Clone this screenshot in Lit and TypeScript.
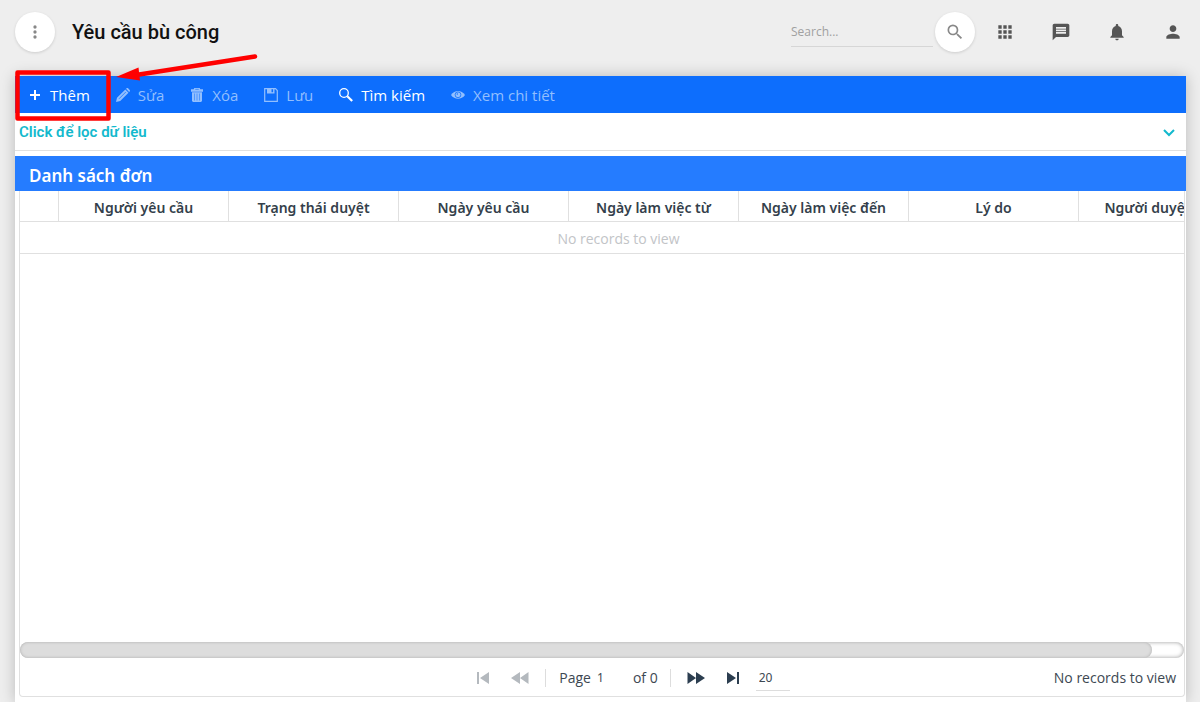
import { LitElement, html, css, svg } from "lit";
import { customElement, state } from "lit/decorators.js";
import { styleMap } from "lit/directives/style-map.js";

const icons = {
  more: svg`<path d="M12 8a2 2 0 1 0 0-4 2 2 0 0 0 0 4zm0 2a2 2 0 1 0 0 4 2 2 0 0 0 0-4zm0 6a2 2 0 1 0 0 4 2 2 0 0 0 0-4z"/>`,
  search: svg`<path d="M15.5 14h-.79l-.28-.27A6.47 6.47 0 0 0 16 9.5 6.5 6.5 0 1 0 9.5 16c1.61 0 3.09-.59 4.23-1.57l.27.28v.79l5 4.99L20.49 19l-4.99-5zm-6 0C7.01 14 5 11.99 5 9.5S7.01 5 9.5 5 14 7.01 14 9.5 11.99 14 9.5 14z"/>`,
  apps: svg`<path d="M4 8h4V4H4v4zm6 12h4v-4h-4v4zm-6 0h4v-4H4v4zm0-6h4v-4H4v4zm6 0h4v-4h-4v4zm6-10v4h4V4h-4zm-6 4h4V4h-4v4zm6 6h4v-4h-4v4zm0 6h4v-4h-4v4z"/>`,
  message: svg`<path d="M20 2H4c-1.1 0-1.99.9-1.99 2L2 22l4-4h14c1.1 0 2-.9 2-2V4c0-1.100-.9-2-2-2zm-2 12H6v-2h12v2zm0-3H6V9h12v2zm0-3H6V6h12v2z"/>`,
  bell: svg`<path d="M12 22c1.100 0 2-.9 2-2h-4c0 1.100.89 2 2 2zm6-6v-5c0-3.070-1.640-5.640-4.500-6.320V4c0-.83-.67-1.500-1.500-1.500s-1.500.67-1.500 1.500v.68C7.630 5.360 6 7.920 6 11v5l-2 2v1h16v-1l-2-2z"/>`,
  person: svg`<path d="M12 12c2.210 0 4-1.790 4-4s-1.790-4-4-4-4 1.790-4 4 1.790 4 4 4zm0 2c-2.670 0-8 1.340-8 4v2h16v-2c0-2.660-5.330-4-8-4z"/>`,
};
const material = (name: keyof typeof icons) =>
  html`<svg class="material" viewBox="0 0 24 24" aria-hidden="true">${icons[name]}</svg>`;

const tools = [
  { label: "Thêm", enabled: true, art: svg`<path d="M7 2v10M2 7h10" stroke="currentColor" stroke-width="2"/>` },
  { label: "Sửa", enabled: false, art: svg`<path fill="currentColor" d="M0 14l1-4.200L9.300 1.500l3.200 3.200L4.200 13zM10 .8l.6-.5c.5-.4 1-.4 1.500 0l1.600 1.600c.4.5.4 1 0 1.500l-.6.6z"/><path d="M3 10.800L9.800 4" stroke="#0d6efd" stroke-width=".7"/>` },
  { label: "Xóa", enabled: false, art: svg`<path fill="currentColor" d="M4.300 0h5.400l.6 1.300H13v2.400H1V1.300h2.700zM2 4.200h10V13l-1 1H3l-1-1z"/><path fill="#0d6efd" d="M5.300.9h3.400v.6H5.300z"/><path d="M4.500 5.500v7M7 5.500v7M9.500 5.500v7" stroke="#0d6efd" stroke-width=".5"/>` },
  { label: "Lưu", enabled: false, art: svg`<path fill="none" stroke="currentColor" stroke-width="1.200" d="M.7.700h10.800l1.800 1.800v10.800H.7z"/><path fill="currentColor" d="M3 0h7.500v5.500H3z"/><path fill="#0d6efd" d="M7.500 1.200h1.600v3H7.500z"/>` },
  { label: "Tìm kiếm", enabled: true, art: svg`<circle cx="5" cy="5" r="4.300" fill="none" stroke="currentColor" stroke-width="1.300"/><path d="M8.300 8.300L13.200 13" stroke="currentColor" stroke-width="2.200"/>` },
  { label: "Xem chi tiết", enabled: false, art: svg`<path fill="currentColor" d="M0 7C3.500 1.800 10.500 1.800 14 7 10.500 12 3.500 12 0 7z"/><circle cx="7" cy="6.800" r="2.900" fill="none" stroke="#0d6efd" stroke-width=".8"/><circle cx="6.300" cy="6" r=".7" fill="#0d6efd"/>` },
];

const columns = [
  { title: "", width: 39 },
  { title: "Người yêu cầu", width: 170 },
  { title: "Trạng thái duyệt", width: 170 },
  { title: "Ngày yêu cầu", width: 170 },
  { title: "Ngày làm việc từ", width: 170 },
  { title: "Ngày làm việc đến", width: 170 },
  { title: "Lý do", width: 170 },
  { title: "Người duyệt", width: 138 },
];
const tableWidth = columns.reduce((sum, c) => sum + c.width, 0);

@customElement("app-header")
export class AppHeader extends LitElement {
  static styles = css`
    :host { display: flex; align-items: center; height: 64px; padding: 0 7px 12px 15px; color: #555; }
    button { border: 0; padding: 0; background: none; color: inherit; width: 40px; height: 40px; display: grid; place-items: center; }
    .round { background: #fff; border-radius: 50%; color: #888; box-shadow: 0 1px 3px rgba(0, 0, 0, 0.14); }
    .material { width: 20px; height: 20px; fill: currentColor; display: block; }
    h1 { margin: 0 auto 0 17px; font: 500 20px/28px Roboto, sans-serif; color: #111; }
    .search { display: flex; align-items: center; gap: 2px; margin-right: 10px; }
    input { box-sizing: border-box; width: 142px; height: 30px; border: 0; border-bottom: 1px solid #d6d6d6; padding: 0; background: none; font: 12px/20px "Open Sans", sans-serif; outline: 0; }
    input::placeholder { color: #a0a0a0; opacity: 1; }
    nav { display: flex; gap: 16px; }
  `;
  render() {
    return html`
      <button class="round" aria-label="Menu">${material("more")}</button>
      <h1>Yêu cầu bù công</h1>
      <form class="search" role="search">
        <input type="search" placeholder="Search..." aria-label="Search" />
        <button type="button" class="round" aria-label="Search">${material("search")}</button>
      </form>
      <nav>
        <button aria-label="Apps">${material("apps")}</button>
        <button aria-label="Messages">${material("message")}</button>
        <button aria-label="Notifications">${material("bell")}</button>
        <button aria-label="Account">${material("person")}</button>
      </nav>
    `;
  }
}

@customElement("app-toolbar")
export class AppToolbar extends LitElement {
  static styles = css`
    :host { display: flex; height: 37px; background: #0d6efd; position: relative; }
    button { display: flex; align-items: center; gap: 8px; border: 0; padding: 0 13px; background: none; color: #fff; font: 15px/24px "Open Sans", sans-serif; white-space: nowrap; }
    button:disabled { color: #92bffe; }
    .icon { width: 14px; height: 14px; }
    .callout { position: absolute; left: -1px; top: -24px; width: 246px; height: 70px; pointer-events: none; }
  `;
  render() {
    return html`
      ${tools.map((t) => html`<button ?disabled=${!t.enabled}>
        <svg class="icon" viewBox="0 0 14 14" aria-hidden="true">${t.art}</svg>${t.label}
      </button>`)}
      <svg class="callout" viewBox="0 0 246 70" aria-hidden="true">
        <rect x="3.500" y="20.500" width="91" height="46" fill="none" stroke="#f00" stroke-width="4.500" stroke-linejoin="round"/>
        <path d="M241 4.500L122 23" stroke="#f00" stroke-width="4.500" stroke-linecap="round"/>
        <path d="M102 25L124.500 15.500 126 28.500z" fill="#f00"/>
      </svg>
    `;
  }
}

@customElement("request-grid")
export class RequestGrid extends LitElement {
  static styles = css`
    :host { display: flex; flex-direction: column; flex: 1; min-height: 0; margin: 0 1px 5px 4px; border: 1px solid #e0e0e0; border-top: 0; border-radius: 0 0 4px 4px; font: 14px/20px "Open Sans", sans-serif; color: #3d4852; }
    .view { flex: 1; overflow: hidden; min-height: 0; }
    table { table-layout: fixed; border-collapse: separate; border-spacing: 0; }
    th, td { box-sizing: border-box; padding: 2px 0 0; text-align: center; border-bottom: 1px solid #e0e0e0; }
    th { height: 31px; padding-top: 4px; font-family: "Noto Sans", sans-serif; font-weight: 600; color: #343f4b; border-right: 1px solid #e0e0e0; white-space: nowrap; }
    td { height: 32px; color: #c2c4c7; }
    .track { height: 16px; border-radius: 8px; background: #fff; box-shadow: inset 0 0 4px #999; overflow: hidden; }
    .thumb { height: 16px; border-radius: 8px; background: #ddd; box-shadow: inset 0 0 3px #aaa; }
    .pager { box-sizing: border-box; display: grid; grid-template-columns: 1fr auto 1fr; align-items: center; height: 38px; padding-top: 2px; }
    .controls { grid-column: 2; display: flex; align-items: center; margin-left: 50px; }
    .controls button { border: 0; padding: 0; background: none; color: #2c3e50; display: grid; place-items: center; width: 37px; height: 20px; }
    .controls button:disabled { color: #b4b9be; }
    .arrow { width: 18px; height: 14px; fill: currentColor; }
    .rule { width: 1px; height: 18px; background: #ddd; margin: 0 7px; }
    .page { display: flex; align-items: center; gap: 6px; margin-left: 6px; }
    .total { margin-right: 5px; }
    input, select { appearance: none; box-sizing: border-box; border: 0; background: none; padding: 0; font: 12px/20px "Noto Sans", sans-serif; color: inherit; outline: 0; }
    input { width: 36px; }
    select { width: 34px; height: 26px; margin-left: 4px; padding-left: 3px; border-bottom: 1px solid #ddd; }
    .status { justify-self: end; padding-right: 8px; }
  `;
  @state() page = "1";
  render() {
    const thumb = styleMap({ width: `${(1164 / tableWidth) * 100}%` });
    return html`
      <div class="view">
        <table style=${styleMap({ width: `${tableWidth}px` })}>
          <colgroup>${columns.map((c) => html`<col style=${styleMap({ width: `${c.width}px` })} />`)}</colgroup>
          <thead><tr>${columns.map((c) => html`<th scope="col">${c.title}</th>`)}</tr></thead>
          <tbody><tr><td colspan=${columns.length}>No records to view</td></tr></tbody>
        </table>
      </div>
      <div class="track"><div class="thumb" style=${thumb}></div></div>
      <div class="pager">
        <div class="controls">
          <button disabled aria-label="First page"><svg class="arrow" viewBox="0 0 18 14"><path d="M3 1h2v12H3zM15 1v12L6 7z"/></svg></button>
          <button disabled aria-label="Previous page"><svg class="arrow" viewBox="0 0 18 14"><path d="M9 1v12L0 7zM17.500 1v12L9 7z"/></svg></button>
          <span class="rule"></span>
          <label class="page">Page <input .value=${this.page} /></label>
          <span class="total">of 0</span>
          <span class="rule"></span>
          <button aria-label="Next page"><svg class="arrow" viewBox="0 0 18 14"><path d="M.5 1v12L9 7zM9 1v12l9-6z"/></svg></button>
          <button aria-label="Last page"><svg class="arrow" viewBox="0 0 18 14"><path d="M3 1v12l9-6zM13 1h2v12h-2z"/></svg></button>
          <select aria-label="Page size"><option>20</option><option>50</option></select>
        </div>
        <span class="status">No records to view</span>
      </div>
    `;
  }
}

@customElement("app-root")
export class AppRoot extends LitElement {
  static styles = css`
    :host { display: flex; flex-direction: column; box-sizing: border-box; height: 100vh; overflow: hidden; background: #eee; }
    main { flex: 1; min-height: 0; display: flex; flex-direction: column; margin: 0 14px 0 15px; background: #fff; box-shadow: 0 0 14px rgba(0, 0, 0, 0.22); }
    .filter { display: flex; align-items: center; justify-content: space-between; box-sizing: border-box; height: 38px; padding: 0 10px 0 4px; border: 0; border-bottom: 1px solid #e0e0e0; margin-bottom: 5px; background: none; color: #13b9cd; font: 600 15px/20px Roboto, sans-serif; }
    .chevron { width: 14px; height: 14px; }
    h2 { margin: 0; padding: 5px 14px 0; background: #257cff; color: #fff; font: 600 17px/30px "Noto Sans", sans-serif; }
  `;
  render() {
    return html`
      <app-header></app-header>
      <main>
        <app-toolbar></app-toolbar>
        <button class="filter">Click để lọc dữ liệu
          <svg class="chevron" viewBox="0 0 14 14" aria-hidden="true"><path d="M2 5l5 5 5-5" fill="none" stroke="currentColor" stroke-width="2"/></svg>
        </button>
        <h2>Danh sách đơn</h2>
        <request-grid></request-grid>
      </main>
    `;
  }
}
